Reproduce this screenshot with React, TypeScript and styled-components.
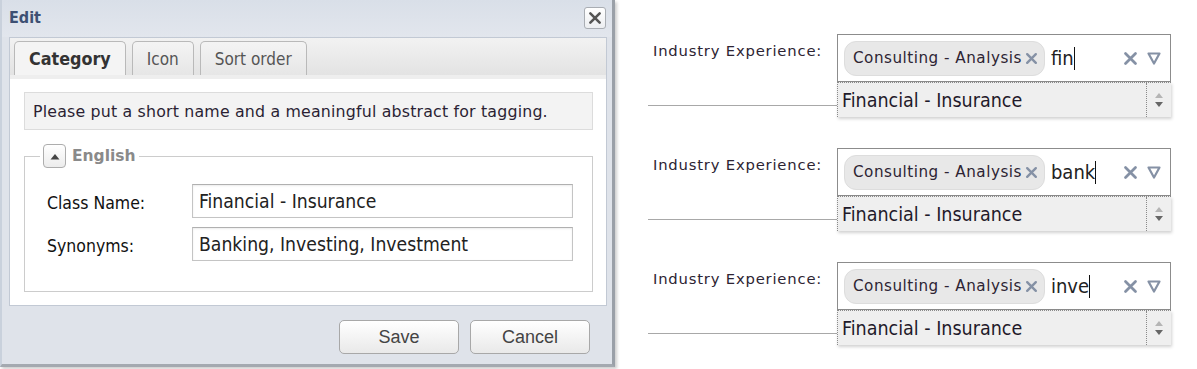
import styled, { createGlobalStyle } from "styled-components";

const GlobalStyle = createGlobalStyle`
  * { box-sizing: border-box; }
  body {
    margin: 0;
    background: #ffffff;
    font-family: "DejaVu Sans", Verdana, sans-serif;
  }
`;

const Page = styled.div`
  display: flex;
  width: 1197px;
  height: 369px;
  overflow: hidden;
`;

/* ---------- Edit dialog ---------- */

const Dialog = styled.div`
  display: flex;
  flex-direction: column;
  width: 615px;
  height: 367px;
  background: #dfe3ea;
  border-left: 2px solid #c9d1dc;
  border-right: 3px solid #9aa0a8;
  border-bottom: 3px solid #a4a9b0;
  box-shadow: 2px 2px 3px rgba(0, 0, 0, 0.2);
`;

const TitleBar = styled.div`
  display: flex;
  align-items: center;
  justify-content: space-between;
  height: 37px;
  padding: 0 6px 0 7px;
  background: linear-gradient(#d9dfe8, #e2e6ed);
`;

const Title = styled.span`
  font-family: "DejaVu Sans Condensed", "DejaVu Sans", sans-serif;
  font-size: 16px;
  font-weight: bold;
  color: #3d5073;
  margin-top: -2px;
`;

const CloseButton = styled.button`
  display: flex;
  align-items: center;
  justify-content: center;
  width: 22px;
  height: 22px;
  padding: 0;
  margin-top: -1px;
  border: 1px solid #a9adb3;
  border-radius: 3px;
  background: linear-gradient(#ffffff, #eceef1);
  color: #444;
`;

const TabPanel = styled.div`
  display: flex;
  flex-direction: column;
  margin: 0 5px 0 7px;
  border: 1px solid #c2c9d4;
`;

const TabStrip = styled.div`
  display: flex;
  align-items: flex-end;
  gap: 6px;
  height: 41px;
  padding: 3px 0 0 4px;
  background: linear-gradient(#f2f2f2, #e3e3e3);
  border-bottom: 4px solid #eeeeee;
`;

const Tab = styled.div<{ $active?: boolean }>`
  display: flex;
  align-items: center;
  justify-content: center;
  height: 34px;
  padding: 0 14px;
  border: 1px solid #b9b9b9;
  border-bottom: none;
  border-radius: 5px 5px 0 0;
  background: ${({ $active }) => ($active ? "#f4f4f4" : "linear-gradient(#f4f4f4, #e6e6e6)")};
  font-family: "DejaVu Sans Condensed", "DejaVu Sans", sans-serif;
  font-size: ${({ $active }) => ($active ? "17.8px" : "17px")};
  font-weight: ${({ $active }) => ($active ? "bold" : "normal")};
  color: ${({ $active }) => ($active ? "#333" : "#555")};
`;

const Content = styled.div`
  display: flex;
  flex-direction: column;
  height: 226px;
  padding: 13px 13px 0 14px;
  background: #ffffff;
`;

const InfoBox = styled.div`
  height: 38px;
  padding: 0 8px;
  display: flex;
  align-items: center;
  background: #f3f3f3;
  border: 1px solid #dcdcdc;
  font-size: 15.8px;
  letter-spacing: 0.18px;
  white-space: nowrap;
  color: #2b1f33;
`;

const Fieldset = styled.fieldset`
  margin: 14px 0 0;
  padding: 16px 19px 0 22px;
  height: 148px;
  border: 1px solid #cccccc;
`;

const Legend = styled.legend`
  display: flex;
  align-items: center;
  gap: 6px;
  padding: 0 3px;
  margin-left: -7px;
  font-size: 15.5px;
  font-weight: bold;
  color: #8a8a8a;
`;

const CollapseButton = styled.span`
  display: flex;
  align-items: center;
  justify-content: center;
  width: 23px;
  height: 24px;
  border: 1px solid #adadad;
  border-radius: 4px;
  background: linear-gradient(#ffffff, #ececec);
`;

const FieldRow = styled.div`
  display: grid;
  grid-template-columns: 145px 381px;
  align-items: center;
  margin-bottom: 9px;
`;

const FieldLabel = styled.label`
  font-family: "DejaVu Sans Condensed", "DejaVu Sans", sans-serif;
  font-size: 17.5px;
  color: #111;
  padding-top: 4px;
`;

const TextInput = styled.div`
  height: 34px;
  padding: 0 6px;
  display: flex;
  align-items: center;
  border: 1px solid #c4c4c4;
  border-top-color: #b0b0b0;
  box-shadow: inset 0 1px 2px rgba(0, 0, 0, 0.08);
  font-family: "DejaVu Sans Condensed", "DejaVu Sans", sans-serif;
  font-size: 19.2px;
  color: #222;
`;

const Footer = styled.div`
  display: flex;
  justify-content: flex-end;
  gap: 11px;
  padding: 14px 22px 0 0;
`;

const Button = styled.button`
  width: 120px;
  height: 34px;
  border: 1px solid #a8a8a8;
  border-radius: 5px;
  background: linear-gradient(#ffffff, #e9e9e9);
  font-family: "Liberation Sans", Arial, sans-serif;
  font-size: 18px;
  color: #444;
`;

/* ---------- Tag combo examples ---------- */

const Examples = styled.div`
  display: flex;
  flex-direction: column;
  gap: 31px;
  padding: 34px 0 0 33px;
`;

const ComboRow = styled.div`
  display: flex;
  align-items: flex-start;
`;

const RowLabel = styled.div`
  width: 189px;
  height: 72px;
  padding: 8px 0 0 5px;
  border-bottom: 1px solid #a8a8a8;
  font-size: 14.8px;
  letter-spacing: 0.8px;
  white-space: nowrap;
  color: #2d2433;
`;

const Combo = styled.div`
  display: flex;
  flex-direction: column;
  width: 334px;
`;

const ComboBox = styled.div`
  display: flex;
  align-items: center;
  height: 48px;
  padding: 0 6px;
  border: 1px solid #8c8c8c;
  background: #fff;
`;

const Chip = styled.span`
  display: flex;
  align-items: center;
  gap: 3px;
  height: 35px;
  padding: 0 6px 0 8px;
  border: 1px solid #dddddd;
  border-radius: 12px;
  background: #e8e8e8;
  font-size: 15.2px;
  letter-spacing: 0.5px;
  white-space: nowrap;
  color: #2d2433;
`;

const ChipRemove = styled.span`
  display: flex;
  line-height: 1;
`;

const TypedText = styled.span`
  display: flex;
  align-items: center;
  flex: 1;
  margin-left: 6px;
  font-family: "DejaVu Sans Condensed", "DejaVu Sans", sans-serif;
  font-size: 20px;
  color: #222;
`;

const Caret = styled.span`
  width: 1px;
  height: 23px;
  background: #111;
`;

const ComboIcons = styled.span`
  display: flex;
  align-items: center;
  gap: 9px;
  padding-right: 3px;
`;

const Dropdown = styled.div`
  display: flex;
  align-items: center;
  height: 35px;
  border-left: 1px dotted #8a8a8a;
  border-top: 1px dotted #8a8a8a;
  background: #efefef;
  box-shadow: 1px 2px 3px rgba(0, 0, 0, 0.18);
`;

const Option = styled.span`
  flex: 1;
  padding-left: 4px;
  font-family: "DejaVu Sans Condensed", "DejaVu Sans", sans-serif;
  font-size: 19.5px;
  white-space: nowrap;
  color: #1f1a2a;
`;

const Spinner = styled.span`
  display: flex;
  align-items: center;
  justify-content: center;
  width: 25px;
  height: 100%;
  border-left: 1px dotted #8a8a8a;
`;

function XIcon({ size, color }: { size: number; color: string }) {
  return (
    <svg width={size} height={size} viewBox="0 0 12 12">
      <path d="M2 2 L10 10 M10 2 L2 10" stroke={color} strokeWidth="2.2" strokeLinecap="round" />
    </svg>
  );
}

function DownTriangle() {
  return (
    <svg width="14" height="13" viewBox="0 0 14 13">
      <path d="M1.5 1.5 H12.5 L7 11.5 Z" fill="none" stroke="#8591a5" strokeWidth="2.2" strokeLinejoin="round" />
    </svg>
  );
}

function SpinArrows() {
  return (
    <svg width="10" height="18" viewBox="0 0 10 18">
      <path d="M1 7 L5 2 L9 7 Z" fill="#b5b5b5" />
      <path d="M1 11 L5 16 L9 11 Z" fill="#666" />
    </svg>
  );
}

const typedValues = ["fin", "bank", "inve"];

function TagCombo({ typed }: { typed: string }) {
  return (
    <ComboRow>
      <RowLabel>Industry Experience:</RowLabel>
      <Combo>
        <ComboBox>
          <Chip>
            Consulting - Analysis
            <ChipRemove>
              <XIcon size={13} color="#8591a5" />
            </ChipRemove>
          </Chip>
          <TypedText>
            {typed}
            <Caret />
          </TypedText>
          <ComboIcons>
            <XIcon size={15} color="#8591a5" />
            <DownTriangle />
          </ComboIcons>
        </ComboBox>
        <Dropdown>
          <Option>Financial - Insurance</Option>
          <Spinner>
            <SpinArrows />
          </Spinner>
        </Dropdown>
      </Combo>
    </ComboRow>
  );
}

export default function App() {
  return (
    <>
      <GlobalStyle />
      <Page>
        <Dialog>
          <TitleBar>
            <Title>Edit</Title>
            <CloseButton>
              <XIcon size={14} color="#555" />
            </CloseButton>
          </TitleBar>
          <TabPanel>
            <TabStrip>
              <Tab $active>Category</Tab>
              <Tab>Icon</Tab>
              <Tab>Sort order</Tab>
            </TabStrip>
            <Content>
              <InfoBox>Please put a short name and a meaningful abstract for tagging.</InfoBox>
              <Fieldset>
                <Legend>
                  <CollapseButton>
                    <svg width="10" height="7" viewBox="0 0 10 7">
                      <path d="M0.5 6.5 L5 1 L9.5 6.5 Z" fill="#444" />
                    </svg>
                  </CollapseButton>
                  English
                </Legend>
                <FieldRow>
                  <FieldLabel>Class Name:</FieldLabel>
                  <TextInput>Financial - Insurance</TextInput>
                </FieldRow>
                <FieldRow>
                  <FieldLabel>Synonyms:</FieldLabel>
                  <TextInput>Banking, Investing, Investment</TextInput>
                </FieldRow>
              </Fieldset>
            </Content>
          </TabPanel>
          <Footer>
            <Button>Save</Button>
            <Button>Cancel</Button>
          </Footer>
        </Dialog>
        <Examples>
          {typedValues.map((t) => (
            <TagCombo key={t} typed={t} />
          ))}
        </Examples>
      </Page>
    </>
  );
}
